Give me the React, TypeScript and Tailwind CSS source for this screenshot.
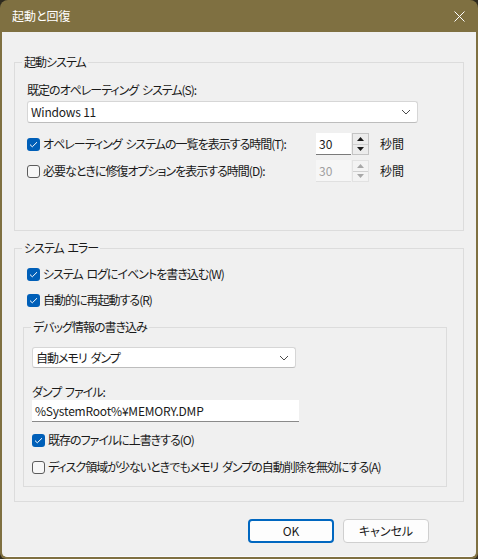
import React from "react";

const font = "font-['Noto_Sans_CJK_JP','Noto_Sans',sans-serif] [font-feature-settings:'palt']";
// Yu Gothic UI kana run narrower than Noto's, so pull the labels in a bit
const jp = "text-[12px] leading-[16px] text-[#1a1a1a] tracking-[-1px] [word-spacing:2px]";
const latin = "text-[12px] leading-[16px] text-[#1a1a1a] tracking-[-0.2px]";

function Check({ checked }: { checked?: boolean }) {
  if (checked) {
    return (
      <span className="w-[13px] h-[13px] rounded-[3px] bg-[#005fb8] flex items-center justify-center shrink-0">
        <svg width="9" height="7" viewBox="0 0 9 7">
          <path d="M1 3.6l2.3 2.2L8 1.2" fill="none" stroke="#ffffff" strokeWidth="1" />
        </svg>
      </span>
    );
  }
  return <span className="w-[13px] h-[13px] rounded-[3px] border border-[#5c5c5c] bg-[#f7f7f7] shrink-0" />;
}

function CheckRow({ label, checked, className = "" }: { label: string; checked?: boolean; className?: string }) {
  return (
    <div className={`flex items-center gap-[3px] h-[20px] ${className}`}>
      <Check checked={checked} />
      <span className={jp}>{label}</span>
    </div>
  );
}

function Chevron() {
  return (
    <svg width="10" height="6" viewBox="0 0 10 6">
      <path d="M1 1l4 4 4-4" fill="none" stroke="#4a4a4a" strokeWidth="1" />
    </svg>
  );
}

function Combo({ value, className, text = jp }: { value: string; className: string; text?: string }) {
  return (
    <div
      className={`flex items-center justify-between bg-white border border-[#d6d6d6] border-b-[#bdbdbd] rounded-[3px] pl-[3px] pr-[6px] ${className}`}
    >
      <span className={text}>{value}</span>
      <Chevron />
    </div>
  );
}

function Spinner({ disabled }: { disabled?: boolean }) {
  const tri = disabled ? "#a8a8a8" : "#1a1a1a";
  return (
    <div className="flex items-stretch h-[22px]">
      <div
        className={`w-[35px] flex items-center pl-[3px] text-[12px] border-b ${
          disabled ? "bg-[#f6f6f6] text-[#a0a0a0] border-[#e0e0e0]" : "bg-white text-[#1a1a1a] border-[#7a7a7a]"
        }`}
      >
        30
      </div>
      <div
        className={`ml-[1px] w-[17px] flex flex-col border ${
          disabled ? "border-[#e2e2e2] bg-[#f3f3f3]" : "border-[#c4c4c4] bg-[#ececec]"
        }`}
      >
        <div className="flex-1 flex items-center justify-center border-b border-[#d0d0d0]">
          <svg width="7" height="4" viewBox="0 0 7 4">
            <path d="M0 4L3.5 0L7 4Z" fill={tri} />
          </svg>
        </div>
        <div className="flex-1 flex items-center justify-center">
          <svg width="7" height="4" viewBox="0 0 7 4">
            <path d="M0 0L3.5 4L7 0Z" fill={tri} />
          </svg>
        </div>
      </div>
    </div>
  );
}

function SpinRow({ label, checked, disabled, className = "" }: { label: string; checked?: boolean; disabled?: boolean; className?: string }) {
  return (
    <div className={`flex items-center ${className}`}>
      <div className="w-[289px] flex items-center gap-[3px]">
        <Check checked={checked} />
        <span className={jp}>{label}</span>
      </div>
      <Spinner disabled={disabled} />
      <span className="ml-[11px] text-[12px] text-[#1a1a1a]">秒間</span>
    </div>
  );
}

export default function App() {
  return (
    <div className={`w-[478px] h-[559px] bg-[#2e2a1e] ${font}`}>
      <div className="h-full rounded-t-[8px] rounded-b-[6px] bg-[#7f7041] px-[2px] pb-[2px] flex flex-col">
        <div className="h-[32px] flex items-center justify-between pl-[10px] pr-[11px] shrink-0">
          <span className="text-[12px] text-white">起動と回復</span>
          <svg width="11" height="11" viewBox="0 0 11 11">
            <path d="M0.5 0.5l10 10M10.5 0.5l-10 10" stroke="#ffffff" strokeWidth="1" />
          </svg>
        </div>

        <div className="flex-1 bg-[#f0f0f0] rounded-b-[5px] border-b border-[#fafafa] px-[12px] pt-[22px] flex flex-col">
          <fieldset className="border border-[#dcdcdc] h-[177px] p-0 m-0">
            <legend className={`ml-[7px] px-[2px] ${jp}`}>起動システム</legend>
            <div className="pl-[12px] pt-[12px]">
              <div className={jp}>既定のオペレーティング システム(S):</div>
              <Combo value="Windows 11" text={latin} className="mt-[3px] w-[391px] h-[22px]" />
              <SpinRow className="mt-[10px]" checked label="オペレーティング システムの一覧を表示する時間(T):" />
              <SpinRow className="mt-[5px]" disabled label="必要なときに修復オプションを表示する時間(D):" />
            </div>
          </fieldset>

          <fieldset className="mt-[9px] border border-[#dcdcdc] h-[262px] p-0 m-0">
            <legend className={`ml-[7px] px-[2px] ${jp}`}>システム エラー</legend>
            <div className="pl-[12px] pt-[8px]">
              <CheckRow checked label="システム ログにイベントを書き込む(W)" />
              <CheckRow className="mt-[6px]" checked label="自動的に再起動する(R)" />
            </div>
            <fieldset className="mt-[9px] ml-[8px] mr-[16px] border border-[#dcdcdc] h-[168px] p-0">
              <legend className={`ml-[7px] px-[2px] ${jp}`}>デバッグ情報の書き込み</legend>
              <div className="pl-[8px] pt-[12px]">
                <Combo value="自動メモリ ダンプ" className="w-[264px] h-[21px]" />
                <div className={`mt-[16px] ${jp}`}>ダンプ ファイル:</div>
                <div className={`w-[267px] h-[22px] bg-white border-b border-[#8a8a8a] flex items-center pl-[3px] ${latin}`}>
                  %SystemRoot%¥MEMORY.DMP
                </div>
                <CheckRow className="mt-[8px]" checked label="既存のファイルに上書きする(O)" />
                <CheckRow className="mt-[7px]" label="ディスク領域が少ないときでもメモリ ダンプの自動削除を無効にする(A)" />
              </div>
            </fieldset>
          </fieldset>

          <div className="mt-[17px] flex justify-end gap-[9px] pr-[35px]">
            <button className="w-[86px] h-[24px] rounded-[4px] border-2 border-[#0067c0] bg-[#fdfdfd] text-[12px] text-[#1a1a1a]">
              OK
            </button>
            <button className="w-[86px] h-[24px] rounded-[4px] border border-[#cfcfcf] bg-[#fdfdfd] text-[12px] text-[#1a1a1a]">
              キャンセル
            </button>
          </div>
        </div>
      </div>
    </div>
  );
}
